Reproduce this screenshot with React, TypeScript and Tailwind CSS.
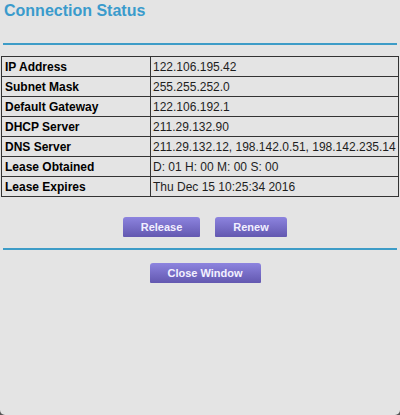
import React from 'react';

const rows: [string, string][] = [
  ['IP Address', '122.106.195.42'],
  ['Subnet Mask', '255.255.252.0'],
  ['Default Gateway', '122.106.192.1'],
  ['DHCP Server', '211.29.132.90'],
  ['DNS Server', '211.29.132.12, 198.142.0.51, 198.142.235.14'],
  ['Lease Obtained', 'D: 01 H: 00 M: 00 S: 00'],
  ['Lease Expires', 'Thu Dec 15 10:25:34 2016'],
];

const PurpleButton: React.FC<{ label: string; width: string }> = ({ label, width }) => (
  <button
    className={`${width} h-[20px] rounded-t-[3px] rounded-b-[1px] bg-gradient-to-b from-[#8d84df] to-[#6358b0] text-[11px] font-bold leading-[20px] text-[#f2f0ff]`}
  >
    {label}
  </button>
);

export default function App() {
  return (
    <div className="h-[415px] w-[400px] bg-[#555555]">
      <div className="h-full rounded-b-[5px] bg-[#e4e4e4] font-['Liberation_Sans',Arial,sans-serif]">
        <h1 className="pl-[4px] text-[16px] font-bold leading-[22px] text-[#3a9bcc]">Connection Status</h1>
        <div className="mx-[3px] mt-[21px] h-[2px] bg-[#3d9cc7]" />

        <table className="ml-[1px] mt-[11px] w-[398px] border-collapse border border-[#333333]">
          <tbody>
            {rows.map(([label, value]) => (
              <tr key={label} className="h-[20px]">
                <td className="w-[149px] border border-[#333333] pl-[3px] text-[12px] font-bold leading-[18px] text-black">
                  {label}
                </td>
                <td className="whitespace-nowrap border border-[#333333] pl-[2px] text-[12px] leading-[18px] text-[#1e1e1e]">
                  {value}
                </td>
              </tr>
            ))}
          </tbody>
        </table>

        <div className="mt-[20px] flex justify-center gap-[15px] pl-[10px]">
          <PurpleButton label="Release" width="w-[77px]" />
          <PurpleButton label="Renew" width="w-[72px]" />
        </div>

        <div className="mx-[3px] mt-[11px] h-[2px] bg-[#3d9cc7]" />

        <div className="mt-[13px] flex justify-center pl-[10px]">
          <PurpleButton label="Close Window" width="w-[111px]" />
        </div>
      </div>
    </div>
  );
}
